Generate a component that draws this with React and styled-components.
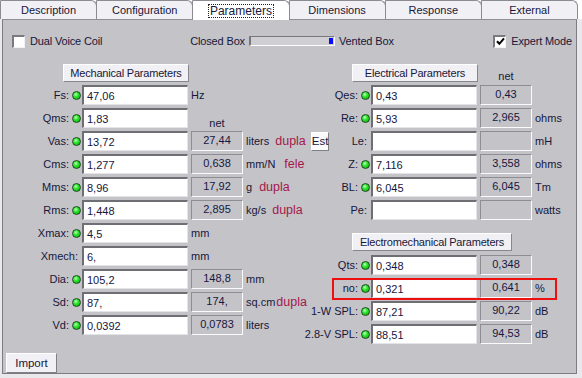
import React from 'react';
import styled, { createGlobalStyle } from 'styled-components';

const Global = createGlobalStyle`
  html, body { margin: 0; padding: 0; background: #e9e9ec; }
  body {
    font-family: "Liberation Sans", Arial, sans-serif;
    font-size: 11px;
    color: #17173a;
  }
  #root { width: 582px; height: 378px; }
`;

const Screen = styled.div`
  width: 582px;
  height: 378px;
  display: flex;
  flex-direction: column;
  overflow: hidden;
`;

const TabBar = styled.div`
  display: flex;
  align-items: flex-start;
  height: 19px;
  background: #fff;
`;

const Tabs = styled.div`
  display: flex;
  align-items: flex-start;
  width: 578px;
`;

const Tab = styled.div`
  flex: 1 1 0;
  height: ${p => (p.$active ? 20 : 19)}px;
  box-sizing: border-box;
  border: 1px solid #8b8b92;
  border-bottom: none;
  border-radius: 1px 6px 0 0;
  background: ${p => (p.$active ? '#ffffff' : '#f1f0f5')};
  display: flex;
  align-items: center;
  justify-content: center;
  font-size: ${p => (p.$active ? 12 : 11)}px;
  position: relative;
  z-index: ${p => (p.$active ? 2 : 1)};
  & + & { margin-left: -1px; }
`;

const FocusText = styled.span`
  border: 1px dotted #222;
  padding: 0 1px;
  line-height: 12px;
`;

const Panel = styled.div`
  margin-left: 2px;
  width: 575px;
  height: 355px;
  box-sizing: border-box;
  background: #c4c3c8;
  border: 1px solid #7c7c83;
  border-top-color: #8f8f96;
  display: flex;
  flex-direction: column;
  padding-top: 14px;
`;

const TopRow = styled.div`
  display: grid;
  grid-template-columns: 1fr auto 1fr;
  align-items: center;
  height: 14px;
  padding: 0 4px 0 9px;
  margin-bottom: 16px;
  letter-spacing: -0.15px;
`;

const CheckLabel = styled.label`
  display: flex;
  align-items: center;
  gap: 5px;
  justify-self: ${p => p.$end ? 'end' : 'start'};
  white-space: nowrap;
`;

const CheckBox = styled.span`
  width: 13px;
  height: 13px;
  box-sizing: border-box;
  background: #fff;
  border-style: solid;
  border-width: 2px 1px 1px 2px;
  border-color: #7a7a80 #f2f2f4 #f2f2f4 #7a7a80;
  display: flex;
  align-items: center;
  justify-content: center;
`;

const BoxSwitch = styled.div`
  display: flex;
  align-items: center;
  gap: 4px;
  white-space: nowrap;
`;

const Track = styled.div`
  width: 86px;
  height: 10px;
  box-sizing: border-box;
  background: #cfced3;
  border-style: solid;
  border-width: 1px 1px 1px 2px;
  border-color: #77777e #ffffff #ffffff #77777e;
  display: flex;
  align-items: center;
  justify-content: flex-end;
  padding-right: 1px;
`;

const Thumb = styled.span`
  width: 4px;
  height: 6px;
  background: #0b0bff;
`;

const Columns = styled.div`
  display: flex;
  align-items: flex-start;
`;

const ParamGrid = styled.div`
  display: grid;
  grid-template-columns: ${p => p.$cols};
  grid-template-rows: ${p => p.$rows};
  row-gap: 3px;
`;

const SectionButton = styled.div`
  grid-column: 2;
  grid-row: ${p => p.$r};
  justify-self: start;
  align-self: start;
  margin-left: -19px;
  margin-top: ${p => p.$mt || 0}px;
  margin-bottom: ${p => p.$mb || 0}px;
  width: ${p => p.$w}px;
  height: 18px;
  box-sizing: border-box;
  background: #f1f0f5;
  border: 1px solid;
  border-color: #ffffff #86868d #86868d #ffffff;
  display: flex;
  align-items: center;
  justify-content: center;
  white-space: nowrap;
  font-size: 11px;
  letter-spacing: -0.2px;
`;

const NetHead = styled.div`
  grid-column: 4;
  grid-row: ${p => p.$r};
  align-self: end;
  text-align: center;
  line-height: 12px;
  margin-bottom: ${p => p.$mb || 0}px;
`;

const LabelCell = styled.div`
  grid-column: 1;
  grid-row: ${p => p.$r};
  display: flex;
  justify-content: flex-end;
  align-items: center;
  gap: 3px;
  padding-right: ${p => (p.$led ? 1 : 4)}px;
  white-space: nowrap;
`;

const Led = styled.span`
  flex: none;
  width: 9px;
  height: 9px;
  box-sizing: border-box;
  border-radius: 50%;
  border: 1px solid #1f4a1f;
  background: radial-gradient(circle at 40% 35%, #c4ffc4 0, #2be62b 38%, #0aa80a 100%);
`;

const ValueBox = styled.div`
  grid-column: 2;
  grid-row: ${p => p.$r};
  height: 20px;
  box-sizing: border-box;
  background: #fff;
  border-style: solid;
  border-width: 2px 1px 1px 2px;
  border-color: #6e6e75 #e4e4e8 #e4e4e8 #6e6e75;
  padding-left: 3px;
  display: flex;
  align-items: center;
  color: #161640;
`;

const NetBox = styled.div`
  grid-column: 4;
  grid-row: ${p => p.$r};
  height: 20px;
  box-sizing: border-box;
  border: 1px solid;
  border-color: #8e8d94 #fbfbfd #fbfbfd #8e8d94;
  display: flex;
  align-items: center;
  justify-content: center;
  padding-bottom: 2px;
  color: #161640;
`;

const UnitCell = styled.div`
  grid-column: ${p => (p.$wide ? '4 / -1' : '6')};
  grid-row: ${p => p.$r};
  display: flex;
  align-items: center;
  white-space: nowrap;
`;

const Note = styled.span`
  color: #a3194b;
  font-size: 12.5px;
  margin-left: ${p => p.$gap}px;
`;

const SmallButton = styled.div`
  margin-left: ${p => p.$ml || 0}px;
  width: ${p => p.$w}px;
  height: ${p => p.$h}px;
  box-sizing: border-box;
  background: ${p => p.$bg || '#f1f0f5'};
  border: 1px solid;
  border-color: #ffffff #7f7f86 #7f7f86 #ffffff;
  display: flex;
  align-items: center;
  justify-content: center;
  font-size: 11.5px;
`;

const Highlight = styled.div`
  grid-column: 1 / -1;
  grid-row: ${p => p.$r};
  justify-self: start;
  margin-left: 34px;
  width: 225px;
  margin-bottom: -2px;
  box-sizing: border-box;
  border: 2px solid #ee1010;
  pointer-events: none;
`;

const Footer = styled.div`
  margin-top: auto;
  padding-left: 3px;
  display: flex;
`;

function ParamRow({ r, label, led = true, value, net, hasNet, unit, note, extra }) {
  return (
    <>
      <LabelCell $r={r} $led={led}>
        {label}
        {led && <Led />}
      </LabelCell>
      <ValueBox $r={r}>{value}</ValueBox>
      {hasNet && <NetBox $r={r}>{net}</NetBox>}
      {(unit || note || extra) && (
        <UnitCell $r={r} $wide={!hasNet}>
          {unit}
          {note && <Note $gap={note.gap}>{note.text}</Note>}
          {extra}
        </UnitCell>
      )}
    </>
  );
}

const leftRows = [
  { label: 'Fs:', value: '47,06', unit: 'Hz' },
  { label: 'Qms:', value: '1,83' },
  { label: 'Vas:', value: '13,72', hasNet: true, net: '27,44', unit: 'liters', note: { text: 'dupla', gap: 6 }, est: true },
  { label: 'Cms:', value: '1,277', hasNet: true, net: '0,638', unit: 'mm/N', note: { text: 'fele', gap: 9 } },
  { label: 'Mms:', value: '8,96', hasNet: true, net: '17,92', unit: 'g', note: { text: 'dupla', gap: 7 } },
  { label: 'Rms:', value: '1,448', hasNet: true, net: '2,895', unit: 'kg/s', note: { text: 'dupla', gap: 6 } },
  { label: 'Xmax:', value: '4,5', unit: 'mm' },
  { label: 'Xmech:', led: false, value: '6,', unit: 'mm' },
  { label: 'Dia:', value: '105,2', hasNet: true, net: '148,8', unit: 'mm' },
  { label: 'Sd:', value: '87,', hasNet: true, net: '174,', unit: 'sq.cm', note: { text: 'dupla', gap: 1 } },
  { label: 'Vd:', value: '0,0392', hasNet: true, net: '0,0783', unit: 'liters' },
];

const elecRows = [
  { label: 'Qes:', value: '0,43', net: '0,43' },
  { label: 'Re:', value: '5,93', net: '2,965', unit: 'ohms' },
  { label: 'Le:', led: false, value: '', net: '', unit: 'mH' },
  { label: 'Z:', value: '7,116', net: '3,558', unit: 'ohms' },
  { label: 'BL:', value: '6,045', net: '6,045', unit: 'Tm' },
  { label: 'Pe:', led: false, value: '', net: '', unit: 'watts' },
];

const emRows = [
  { label: 'Qts:', value: '0,348', net: '0,348' },
  { label: 'no:', value: '0,321', net: '0,641', unit: '%' },
  { label: '1-W SPL:', value: '87,21', net: '90,22', unit: 'dB' },
  { label: '2.8-V SPL:', value: '88,51', net: '94,53', unit: 'dB' },
];

const tabs = ['Description', 'Configuration', 'Parameters', 'Dimensions', 'Response', 'External'];

export default function App() {
  return (
    <Screen>
      <Global />
      <TabBar>
        <Tabs>
          {tabs.map(t => (
            <Tab key={t} $active={t === 'Parameters'}>
              {t === 'Parameters' ? <FocusText>{t}</FocusText> : t}
            </Tab>
          ))}
        </Tabs>
      </TabBar>
      <Panel>
        <TopRow>
          <CheckLabel>
            <CheckBox />
            Dual Voice Coil
          </CheckLabel>
          <BoxSwitch>
            Closed Box
            <Track>
              <Thumb />
            </Track>
            Vented Box
          </BoxSwitch>
          <CheckLabel $end>
            <CheckBox>
              <svg width="9" height="9" viewBox="0 0 9 9">
                <path d="M1 4.2 L3.4 6.8 L8 1.4" fill="none" stroke="#000" strokeWidth="2" />
              </svg>
            </CheckBox>
            Expert Mode
          </CheckLabel>
        </TopRow>
        <Columns>
          <ParamGrid $cols="79px 106px 3px 52px 3px 52px" $rows="18px repeat(11, 20px)">
            <SectionButton $r={1} $w={126}>Mechanical Parameters</SectionButton>
            <NetHead $r={3} $mb={-1}>net</NetHead>
            {leftRows.map((row, i) => (
              <ParamRow
                key={row.label}
                r={i + 2}
                {...row}
                extra={row.est && <SmallButton $ml={5} $w={26} $h={19} $bg="#fafafa">Est</SmallButton>}
              />
            ))}
          </ParamGrid>
          <ParamGrid $cols="73px 106px 3px 52px 3px auto" $rows="18px repeat(6, 20px) auto repeat(4, 20px)">
            <SectionButton $r={1} $w={126}>Electrical Parameters</SectionButton>
            <NetHead $r={1}>net</NetHead>
            {elecRows.map((row, i) => (
              <ParamRow key={row.label} r={i + 2} hasNet {...row} />
            ))}
            <SectionButton $r={8} $w={160} $mt={10} $mb={1}>Electromechanical Parameters</SectionButton>
            {emRows.map((row, i) => (
              <ParamRow key={row.label} r={i + 9} hasNet {...row} />
            ))}
            <Highlight $r={10} />
          </ParamGrid>
        </Columns>
        <Footer>
          <SmallButton $w={51} $h={20}>Import</SmallButton>
        </Footer>
      </Panel>
    </Screen>
  );
}
